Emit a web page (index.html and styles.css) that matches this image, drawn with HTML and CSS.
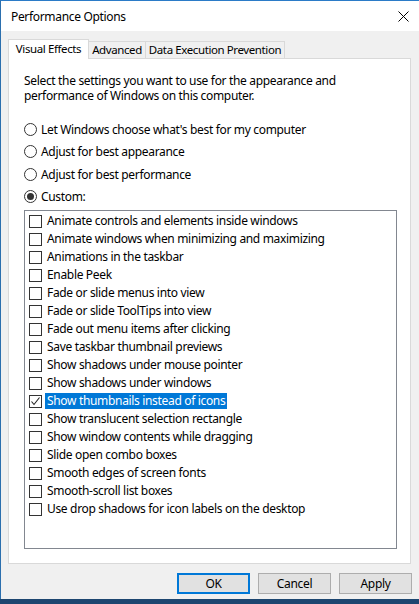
FILE: index.html
```html
<!DOCTYPE html>
<html>
<head>
<meta charset="utf-8">
<link rel="stylesheet" href="styles.css">
</head>
<body>
<div class="window">
  <div class="titlebar">
    <span class="title">Performance Options</span>
    <svg class="close" width="11" height="11" viewBox="0 0 11 11"><path d="M0.5 0.5 L10.5 10.5 M10.5 0.5 L0.5 10.5" stroke="#000" stroke-width="1" fill="none"/></svg>
  </div>
  <div class="client">
    <div class="tabs">
      <div class="tab selected">Visual Effects</div>
      <div class="tab adv">Advanced</div>
      <div class="tab dep">Data Execution Prevention</div>
    </div>
    <div class="panel">
      <p class="intro">Select the settings you want to use for the appearance and performance of Windows on this computer.</p>
      <div class="radios">
        <div class="radio"><span class="circle"></span><span>Let Windows choose what's best for my computer</span></div>
        <div class="radio"><span class="circle"></span><span>Adjust for best appearance</span></div>
        <div class="radio"><span class="circle"></span><span>Adjust for best performance</span></div>
        <div class="radio"><span class="circle on"></span><span>Custom:</span></div>
      </div>
      <div class="listbox">
        <div class="item"><span class="box"></span><span class="label">Animate controls and elements inside windows</span></div>
        <div class="item"><span class="box"></span><span class="label">Animate windows when minimizing and maximizing</span></div>
        <div class="item"><span class="box"></span><span class="label">Animations in the taskbar</span></div>
        <div class="item"><span class="box"></span><span class="label">Enable Peek</span></div>
        <div class="item"><span class="box"></span><span class="label">Fade or slide menus into view</span></div>
        <div class="item"><span class="box"></span><span class="label">Fade or slide ToolTips into view</span></div>
        <div class="item"><span class="box"></span><span class="label">Fade out menu items after clicking</span></div>
        <div class="item"><span class="box"></span><span class="label">Save taskbar thumbnail previews</span></div>
        <div class="item"><span class="box"></span><span class="label">Show shadows under mouse pointer</span></div>
        <div class="item"><span class="box"></span><span class="label">Show shadows under windows</span></div>
        <div class="item"><span class="box"><svg width="11" height="11" viewBox="0 0 11 11"><path d="M1.5 5.5 L4 8.5 L9.5 1.5" stroke="#222" stroke-width="1.1" fill="none"/></svg></span><span class="label sel">Show thumbnails instead of icons</span></div>
        <div class="item"><span class="box"></span><span class="label">Show translucent selection rectangle</span></div>
        <div class="item"><span class="box"></span><span class="label">Show window contents while dragging</span></div>
        <div class="item"><span class="box"></span><span class="label">Slide open combo boxes</span></div>
        <div class="item"><span class="box"></span><span class="label">Smooth edges of screen fonts</span></div>
        <div class="item"><span class="box"></span><span class="label">Smooth-scroll list boxes</span></div>
        <div class="item"><span class="box"></span><span class="label">Use drop shadows for icon labels on the desktop</span></div>
      </div>
    </div>
    <div class="buttons">
      <div class="btn default">OK</div>
      <div class="btn">Cancel</div>
      <div class="btn">Apply</div>
    </div>
  </div>
</div>
</body>
</html>
```
FILE: styles.css
```css
* { box-sizing: border-box; }
html, body { margin: 0; padding: 0; }
body {
  background: #1d4670;
  width: 419px;
  height: 604px;
  overflow: hidden;
  font-family: "Noto Sans", "Open Sans", sans-serif;
  font-size: 12px;
  letter-spacing: -0.33px;
  color: #000;
}
.window {
  width: 419px;
  height: 599px;
  border-top: 1px solid #2b7bc7;
  border-left: 1px solid #2b6fae;
  background: #f0f0f0;
  display: flex;
  flex-direction: column;
}
.titlebar {
  height: 30px;
  background: #fff;
  display: flex;
  align-items: center;
  justify-content: space-between;
  padding-left: 10px;
  padding-right: 10px;
  padding-top: 1px;
}
.title { line-height: 16px; }
.close { display: block; margin-top: -1px; }
.client {
  padding: 8px 7px 0 7px;
  display: flex;
  flex-direction: column;
}
.tabs {
  display: flex;
  align-items: flex-end;
  height: 19px;
  position: relative;
  z-index: 1;
}
.tab {
  height: 17px;
  border: 1px solid #d9d9d9;
  border-bottom: none;
  background: #f0f0f0;
  font-size: 11.5px;
  letter-spacing: -0.4px;
  line-height: 16px;
  margin-left: -1px;
  text-align: center;
  white-space: nowrap;
  flex-shrink: 0;
}
.tab.selected {
  width: 81px;
  height: 20px;
  margin-bottom: -1px;
  margin-left: 0;
  background: #fff;
  line-height: 17px;
}
.tab.adv { width: 58px; }
.tab.dep { width: 140px; }
.panel {
  width: 403px;
  height: 506px;
  background: #fff;
  border: 1px solid #d9d9d9;
  padding: 14px 13px 0 15px;
}
.intro {
  margin: 0;
  line-height: 15px;
  width: 360px;
}
.radios { margin-top: 15px; }
.radio {
  height: 22.5px;
  display: flex;
  align-items: center;
}
.circle {
  width: 13px;
  height: 13px;
  border: 1px solid #333;
  border-radius: 50%;
  margin-right: 4px;
  display: flex;
  align-items: center;
  justify-content: center;
  background: #fff;
}
.circle.on::after {
  content: "";
  width: 7px;
  height: 7px;
  border-radius: 50%;
  background: #333;
}
.listbox {
  margin-top: 2px;
  width: 373px;
  height: 339px;
  border: 1px solid #828790;
  padding: 1px 0 0 4px;
}
.item {
  height: 18px;
  display: flex;
  align-items: center;
}
.box {
  width: 13px;
  height: 13px;
  border: 1px solid #333;
  background: #fff;
  margin-right: 3px;
  display: flex;
  align-items: center;
  justify-content: center;
}
.box svg { display: block; }
.label {
  height: 16px;
  line-height: 16px;
  padding: 0 2px;
  white-space: nowrap;
}
.label.sel {
  background: #0078d7;
  color: #fff;
}
.buttons {
  display: flex;
  justify-content: flex-end;
  gap: 8px;
  margin-top: 9px;
}
.btn {
  width: 73px;
  height: 21px;
  background: #e1e1e1;
  border: 1px solid #adadad;
  display: flex;
  align-items: center;
  justify-content: center;
}
.btn.default {
  border: 2px solid #0078d7;
}
```
